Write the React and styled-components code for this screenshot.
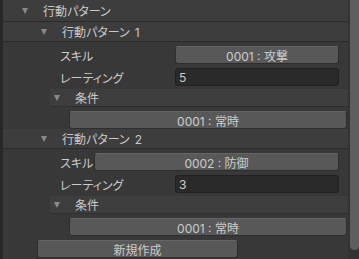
import React from 'react'
import styled, { createGlobalStyle } from 'styled-components'

const GlobalStyle = createGlobalStyle`
    html, body {
        margin: 0;
        padding: 0;
        background: #383838;
    }
    * {
        box-sizing: border-box;
    }
`

const patterns = [
    { id: 1, skill: '0001 : 攻撃', rating: '5', condition: '0001 : 常時', labelWidth: 115 },
    { id: 2, skill: '0002 : 防御', rating: '3', condition: '0001 : 常時', labelWidth: 34 },
]

function App() {
    return (
        <>
            <GlobalStyle />
            <Panel>
                <Content>
                    <Foldout indent={ 22 } tall>
                        <Arrow />
                        <FoldLabel>行動パターン</FoldLabel>
                    </Foldout>
                    { patterns.map((p) => (
                        <React.Fragment key={ p.id }>
                            <Foldout indent={ 41 }>
                                <Arrow />
                                <FoldLabel>行動パターン<Num>{ p.id }</Num></FoldLabel>
                            </Foldout>
                            <Field>
                                <FieldLabel width={ p.labelWidth }>スキル</FieldLabel>
                                <Button>{ p.skill }</Button>
                            </Field>
                            <Field>
                                <FieldLabel width={ 115 }>レーティング</FieldLabel>
                                <Input>{ p.rating }</Input>
                            </Field>
                            <SubFoldout>
                                <Arrow />
                                <FoldLabel>条件</FoldLabel>
                            </SubFoldout>
                            <ConditionRow>
                                <Button>{ p.condition }</Button>
                            </ConditionRow>
                        </React.Fragment>
                    )) }
                    <AddRow>
                        <Button>新規作成</Button>
                    </AddRow>
                </Content>
                <Scrollbar>
                    <Thumb />
                </Scrollbar>
            </Panel>
        </>
    )
}

export default App

const Panel = styled.div`
    width: 359px;
    height: 259px;
    overflow: hidden;
    display: flex;
    background: #383838;
    border-left: 3px solid #282828;
    font-family: "Noto Sans CJK JP", "Liberation Sans", sans-serif;
    font-size: 11px;
    font-feature-settings: "palt";
    color: #c8c8c8;
`

const Content = styled.div`
    flex: 1;
    display: flex;
    flex-direction: column;
`

const Foldout = styled.div`
    height: ${({ tall }) => (tall ? '22px' : '20px')};
    flex-shrink: 0;
    display: flex;
    align-items: center;
    padding-left: ${({ indent }) => indent - 3}px;
    background: #3d3d3d;
    border-bottom: 1px solid #2b2b2b;
`

const SubFoldout = styled.div`
    height: 18px;
    margin: 3px 0 4px 47px;
    flex-shrink: 0;
    display: flex;
    align-items: center;
    padding-left: 4px;
    background: #3e3e3e;
    border-bottom: 1px solid #2f2f2f;
`

const Arrow = styled.span`
    width: 0;
    height: 0;
    border-left: 3.5px solid transparent;
    border-right: 3.5px solid transparent;
    border-top: 6px solid #8a8a8a;
    margin-right: 15px;
`

const FoldLabel = styled.span`
    font-size: 12px;
    color: #cacaca;
`

const Num = styled.span`
    font-family: "Inter", sans-serif;
    margin-left: 5px;
`

const Field = styled.div`
    display: flex;
    align-items: center;
    height: 18px;
    margin-top: 4px;
    padding-left: 57px;
    padding-right: 9px;
    flex-shrink: 0;
`

const FieldLabel = styled.span`
    width: ${({ width }) => width}px;
    flex-shrink: 0;
    font-size: 12px;
    color: #cacaca;
`

const Button = styled.div`
    flex: 1;
    height: 18px;
    display: flex;
    align-items: center;
    justify-content: center;
    background: #585858;
    border: 1px solid #2e2e2e;
    border-top-color: #656565;
    border-radius: 3px;
    font-family: "Inter", "Noto Sans CJK JP", sans-serif;
    font-size: 12px;
    color: #cccccc;
`

const Input = styled.div`
    flex: 1;
    height: 18px;
    display: flex;
    align-items: center;
    padding-left: 3px;
    background: #2a2a2a;
    border: 1px solid #212121;
    border-radius: 3px;
    font-family: "Inter", "Noto Sans CJK JP", sans-serif;
    font-size: 12px;
    color: #cccccc;
`

const ConditionRow = styled.div`
    display: flex;
    height: 18px;
    padding-left: 66px;
    padding-right: 1px;
    flex-shrink: 0;
`

const AddRow = styled.div`
    display: flex;
    height: 19px;
    margin-top: 4px;
    padding-left: 34px;
    width: 235px;
    flex-shrink: 0;
`

const Scrollbar = styled.div`
    width: 11px;
    flex-shrink: 0;
    padding-left: 2px;
    background: #333333;
`

const Thumb = styled.div`
    height: 250px;
    background: #5e5e5e;
    border-radius: 0 0 5px 5px;
`
